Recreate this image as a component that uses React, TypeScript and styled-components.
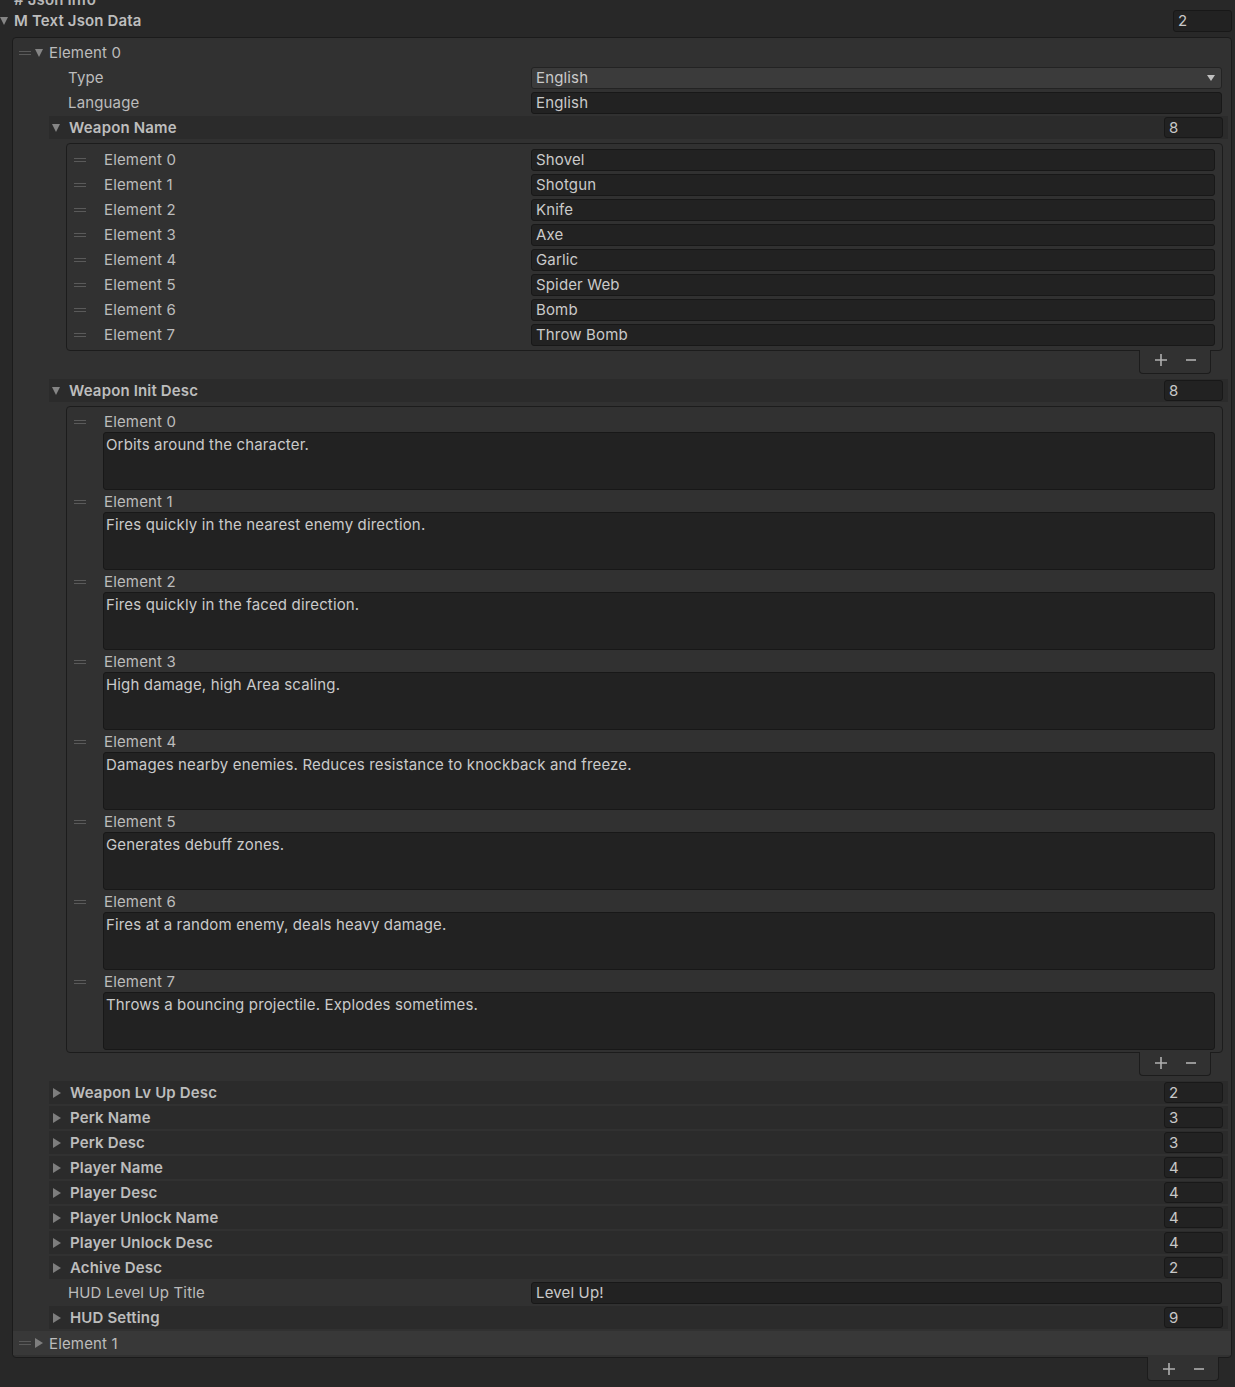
import React from 'react';
import styled, { createGlobalStyle } from 'styled-components';

const weaponNames = ['Shovel', 'Shotgun', 'Knife', 'Axe', 'Garlic', 'Spider Web', 'Bomb', 'Throw Bomb'];

const weaponDescs = [
  'Orbits around the character.',
  'Fires quickly in the nearest enemy direction.',
  'Fires quickly in the faced direction.',
  'High damage, high Area scaling.',
  'Damages nearby enemies. Reduces resistance to knockback and freeze.',
  'Generates debuff zones.',
  'Fires at a random enemy, deals heavy damage.',
  'Throws a bouncing projectile. Explodes sometimes.',
];

const collapsed: { label: string; count: number }[] = [
  { label: 'Weapon Lv Up Desc', count: 2 },
  { label: 'Perk Name', count: 3 },
  { label: 'Perk Desc', count: 3 },
  { label: 'Player Name', count: 4 },
  { label: 'Player Desc', count: 4 },
  { label: 'Player Unlock Name', count: 4 },
  { label: 'Player Unlock Desc', count: 4 },
  { label: 'Achive Desc', count: 2 },
];

function ListFooter({ right, lift }: { right: number; lift: number }) {
  return (
    <Footer $right={right} $lift={lift}>
      <svg width="14" height="14" viewBox="0 0 14 14">
        <path d="M7 1v12M1 7h12" stroke="#b0b0b0" strokeWidth="1.6" />
      </svg>
      <svg width="12" height="14" viewBox="0 0 12 14">
        <path d="M1 7h10" stroke="#b0b0b0" strokeWidth="1.6" />
      </svg>
    </Footer>
  );
}

function FoldRow({ label, count, open }: { label: string; count: number; open?: boolean }) {
  return (
    <FoldHeader>
      <Arrow $open={!!open} />
      <BoldLabel>{label}</BoldLabel>
      <CountField>{count}</CountField>
    </FoldHeader>
  );
}

export default function App() {
  return (
    <Page>
      <GlobalStyle />
      <CutTitle># Json Info</CutTitle>
      <RootRow>
        <Arrow $open />
        <BoldLabel>M Text Json Data</BoldLabel>
        <CountField $tall>2</CountField>
      </RootRow>

      <OuterList>
        <ElementHeader>
          <Handle />
          <Arrow $open />
          <Label>Element 0</Label>
        </ElementHeader>

        <Children>
          <FieldRow>
            <LabelCell $width={482}>Type</LabelCell>
            <Dropdown>
              English
              <DropArrow />
            </Dropdown>
          </FieldRow>
          <FieldRow>
            <LabelCell $width={482}>Language</LabelCell>
            <Field>English</Field>
          </FieldRow>

          <FoldRow label="Weapon Name" count={8} open />
          <InnerList $padTop={3} $padBottom={3}>
            {weaponNames.map((name, i) => (
              <ItemRow key={i}>
                <Handle />
                <LabelCell $width={445}>Element {i}</LabelCell>
                <Field>{name}</Field>
              </ItemRow>
            ))}
          </InnerList>
          <ListFooter right={17} lift={3} />

          <FoldRow label="Weapon Init Desc" count={8} open />
          <InnerList $padTop={4} $padBottom={1}>
            {weaponDescs.map((desc, i) => (
              <DescItem key={i}>
                <DescLabelRow>
                  <Handle />
                  <LabelCell $width={445}>Element {i}</LabelCell>
                </DescLabelRow>
                <TextArea>{desc}</TextArea>
              </DescItem>
            ))}
          </InnerList>
          <ListFooter right={17} lift={2} />

          {collapsed.map((c) => (
            <FoldRow key={c.label} label={c.label} count={c.count} />
          ))}
          <FieldRow>
            <LabelCell $width={482}>HUD Level Up Title</LabelCell>
            <Field>Level Up!</Field>
          </FieldRow>
          <FoldRow label="HUD Setting" count={9} />
        </Children>

        <ElementHeader $selected>
          <Handle />
          <Arrow $open={false} />
          <Label>Element 1</Label>
        </ElementHeader>
      </OuterList>
      <ListFooter right={16} lift={0} />
    </Page>
  );
}

const GlobalStyle = createGlobalStyle`
  html, body {
    margin: 0;
    padding: 0;
    background: #282828;
  }
  body {
    font-family: Inter, "Noto Sans", sans-serif;
    font-size: 15px;
    letter-spacing: 0.15px;
    color: #bcbcbc;
  }
`;

const Page = styled.div`
  width: 1235px;
  height: 1387px;
  overflow: hidden;
  background: #282828;
  display: flex;
  flex-direction: column;
`;

const CutTitle = styled.div`
  height: 8px;
  flex: 0 0 8px;
  line-height: 0;
  padding-left: 14px;
  font-weight: 600;
  color: #b8b8b8;
  white-space: nowrap;
`;

const RootRow = styled.div`
  display: flex;
  align-items: center;
  height: 25px;
  flex: 0 0 25px;
  padding-right: 3px;
  margin-bottom: 4px;

  & > span:first-child {
    margin-right: 6px;
  }
`;

const Arrow = styled.span<{ $open: boolean }>`
  display: inline-block;
  flex: 0 0 auto;
  width: 0;
  height: 0;
  ${({ $open }) =>
    $open
      ? `
    border-left: 4.5px solid transparent;
    border-right: 4.5px solid transparent;
    border-top: 8px solid #858585;
    margin: 0 9px 0 0;
  `
      : `
    border-top: 5px solid transparent;
    border-bottom: 5px solid transparent;
    border-left: 8px solid #7e7e7e;
    margin: 0 9px 0 1px;
  `}
`;

const BoldLabel = styled.span`
  font-weight: 600;
  color: #bdbdbd;
  white-space: nowrap;
`;

const Label = styled.span`
  color: #bcbcbc;
  white-space: nowrap;
`;

const CountField = styled.div<{ $tall?: boolean }>`
  margin-left: auto;
  width: 59px;
  height: ${({ $tall }) => ($tall ? 22 : 21)}px;
  box-sizing: border-box;
  background: #222222;
  border: 1px solid #181818;
  border-radius: 3px;
  padding-left: 4px;
  display: flex;
  align-items: center;
  color: #c8c8c8;
`;

const OuterList = styled.div`
  margin: 0 3px 0 12px;
  background: #313131;
  border: 1px solid #1b1b1b;
  border-radius: 4px;
  padding: 2px 0 2px 0;
  display: flex;
  flex-direction: column;
`;

const ElementHeader = styled.div<{ $selected?: boolean }>`
  display: flex;
  align-items: center;
  height: ${({ $selected }) => ($selected ? 24 : 25)}px;
  margin-top: ${({ $selected }) => ($selected ? 1 : 0)}px;
  padding-left: 6px;
  background: ${({ $selected }) => ($selected ? '#383838' : 'transparent')};

  & > span:nth-child(2) {
    margin: 0 6px 0 4px;
  }
`;

const Handle = styled.span`
  flex: 0 0 12px;
  width: 12px;
  height: 4px;
  border-top: 1px solid #5a5a5a;
  border-bottom: 1px solid #5a5a5a;
  box-sizing: border-box;
`;

const Children = styled.div`
  margin: 0 3px 0 36px;
  display: flex;
  flex-direction: column;
`;

const FieldRow = styled.div`
  display: flex;
  align-items: center;
  height: 25px;
  padding-right: 6px;
`;

const LabelCell = styled.div<{ $width: number }>`
  flex: 0 0 ${({ $width }) => $width}px;
  box-sizing: border-box;
  padding-left: 18px;
  white-space: nowrap;
  color: #bcbcbc;

  ${FieldRow} > & {
    padding-left: 19px;
  }
`;

const Field = styled.div`
  flex: 1;
  height: 22px;
  box-sizing: border-box;
  background: #222222;
  border: 1px solid #181818;
  border-radius: 3px;
  padding-left: 4px;
  display: flex;
  align-items: center;
  color: #cacaca;
  white-space: nowrap;
`;

const Dropdown = styled.div`
  flex: 1;
  height: 22px;
  box-sizing: border-box;
  background: #3b3b3b;
  border: 1px solid #232323;
  border-radius: 3px;
  padding: 0 6px 0 4px;
  display: flex;
  align-items: center;
  justify-content: space-between;
  color: #cacaca;
`;

const DropArrow = styled.span`
  width: 0;
  height: 0;
  border-left: 4.5px solid transparent;
  border-right: 4.5px solid transparent;
  border-top: 6px solid #c0c0c0;
`;

const FoldHeader = styled.div`
  display: flex;
  align-items: center;
  height: 23px;
  margin: 1px 0;
  background: #2b2b2b;
  padding: 0 5px 0 3px;
`;

const InnerList = styled.div<{ $padTop: number; $padBottom: number }>`
  margin: 3px 5px 0 17px;
  border: 1px solid #1c1c1c;
  border-radius: 4px;
  background: #313131;
  padding: ${({ $padTop }) => $padTop}px 7px ${({ $padBottom }) => $padBottom}px 7px;
  display: flex;
  flex-direction: column;
`;

const ItemRow = styled.div`
  display: flex;
  align-items: center;
  height: 25px;
`;

const DescItem = styled.div`
  display: flex;
  flex-direction: column;
  margin-bottom: 1px;
`;

const DescLabelRow = styled.div`
  display: flex;
  align-items: center;
  height: 21px;
`;

const TextArea = styled.div`
  margin-left: 29px;
  height: 58px;
  box-sizing: border-box;
  background: #222222;
  border: 1px solid #181818;
  border-radius: 3px;
  padding: 1px 2px;
  line-height: 22px;
  color: #cacaca;
`;

const Footer = styled.div<{ $right: number; $lift: number }>`
  align-self: flex-end;
  margin: -1px ${({ $right }) => $right}px 4px 0;
  width: 72px;
  height: 24px;
  box-sizing: border-box;
  background: #313131;
  border: 1px solid #1c1c1c;
  border-top: none;
  border-radius: 0 0 4px 4px;
  display: flex;
  align-items: center;
  justify-content: center;
  gap: 17px;
  padding: 0 0 ${({ $lift }) => $lift}px 1px;
`;
